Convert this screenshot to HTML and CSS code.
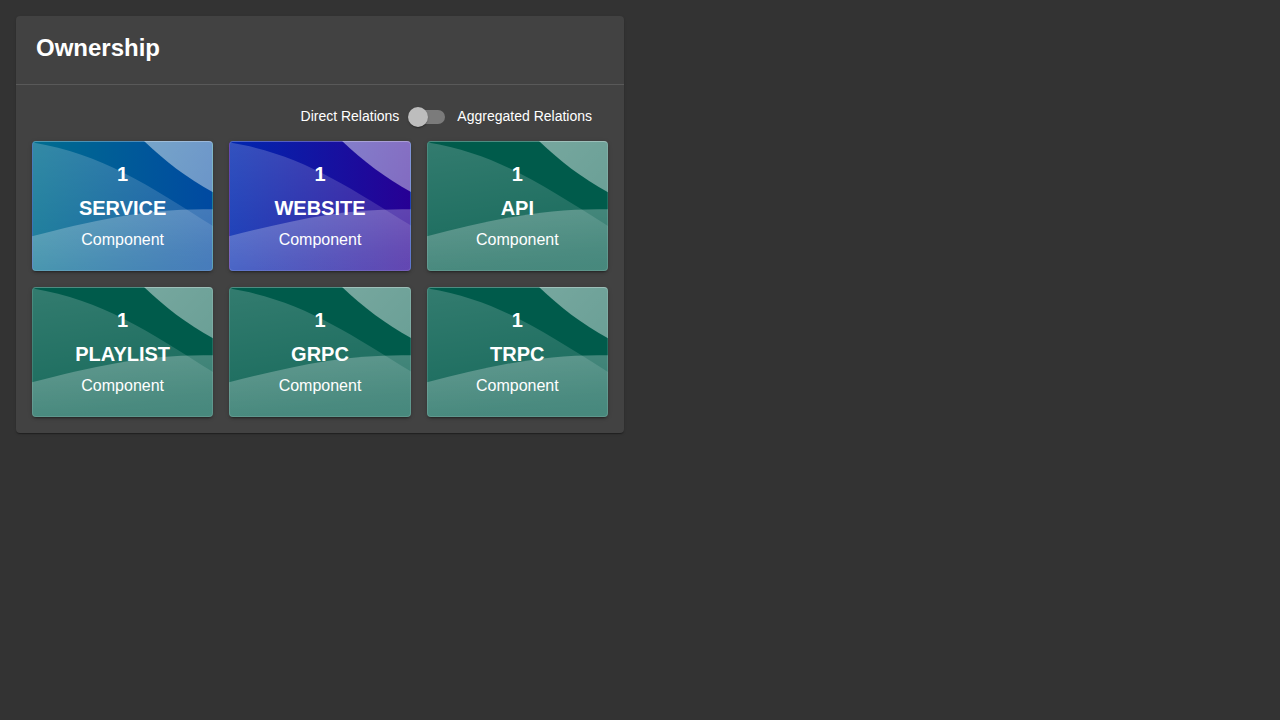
FILE: index.html
```html
<!DOCTYPE html>
<html lang="en">
<head>
<meta charset="utf-8">
<title>Ownership</title>
<link rel="stylesheet" href="styles.css">
</head>
<body>
<section class="panel">
  <header class="panel-header"><h5 class="panel-title">Ownership</h5></header>
  <hr class="divider">
  <div class="panel-content">
    <div class="toggle-row">
      <span>Direct Relations</span>
      <span class="switch" role="switch" aria-checked="false"><span class="thumb"></span></span>
      <span>Aggregated Relations</span>
    </div>
    <div class="grid">
      <div class="card service"><p class="bold">1</p><p class="bold kind">service</p><p class="sub">Component</p></div>
      <div class="card website"><p class="bold">1</p><p class="bold kind">website</p><p class="sub">Component</p></div>
      <div class="card"><p class="bold">1</p><p class="bold kind">api</p><p class="sub">Component</p></div>
      <div class="card"><p class="bold">1</p><p class="bold kind">playlist</p><p class="sub">Component</p></div>
      <div class="card"><p class="bold">1</p><p class="bold kind">grpc</p><p class="sub">Component</p></div>
      <div class="card"><p class="bold">1</p><p class="bold kind">trpc</p><p class="sub">Component</p></div>
    </div>
  </div>
</section>
</body>
</html>
```
FILE: styles.css
```css
* { box-sizing: border-box; }
body {
  margin: 0;
  padding: 16px;
  background: #333;
  color: #fff;
  font-family: "Liberation Sans", Arial, sans-serif;
}
.panel {
  width: 608px;
  height: 417px;
  background: #424242;
  border-radius: 4px;
  box-shadow: 0 2px 1px -1px rgba(0,0,0,.2), 0 1px 1px 0 rgba(0,0,0,.14), 0 1px 3px 0 rgba(0,0,0,.12);
}
.panel-header { height: 68px; padding: 16px 20px; }
.panel-title { margin: 0; font-size: 24px; line-height: 32px; font-weight: 700; }
.divider { height: 1px; margin: 0; border: 0; background: rgba(255,255,255,.12); }
.panel-content { padding: 12px 16px 16px; }
.toggle-row {
  display: flex;
  align-items: center;
  justify-content: flex-end;
  height: 40px;
  padding-right: 16px;
  font-size: 14px;
  line-height: 20px;
}
.toggle-row > span:first-child, .toggle-row > span:last-child { padding-bottom: 2px; }
.switch {
  display: flex;
  align-items: center;
  width: 34px;
  height: 14px;
  margin: 0 12px;
  border-radius: 7px;
  background: #7b7b7b;
}
.thumb {
  flex: none;
  width: 20px;
  height: 20px;
  margin-left: -3px;
  border-radius: 50%;
  background: #bdbdbd;
  box-shadow: 0 2px 1px -1px rgba(0,0,0,.2), 0 1px 1px 0 rgba(0,0,0,.14), 0 1px 3px 0 rgba(0,0,0,.12);
}
.grid { display: grid; grid-template-columns: repeat(3, 1fr); gap: 16px; margin-top: 4px; }
.card {
  --base: linear-gradient(90deg, #005b4b, #005b4b);
  --wave: url("data:image/svg+xml,%3Csvg xmlns='http://www.w3.org/2000/svg' viewBox='-1 -1 182 130' preserveAspectRatio='none'%3E%3Cdefs%3E%3ClinearGradient id='g' gradientUnits='userSpaceOnUse' x1='0' y1='0' x2='20' y2='128'%3E%3Cstop stop-color='white' stop-opacity='.2'/%3E%3Cstop offset='1' stop-color='white' stop-opacity='.1'/%3E%3C/linearGradient%3E%3ClinearGradient id='h' gradientUnits='userSpaceOnUse' x1='90' y1='67' x2='94' y2='128'%3E%3Cstop stop-color='white' stop-opacity='.27'/%3E%3Cstop offset='1' stop-color='white' stop-opacity='.2'/%3E%3C/linearGradient%3E%3ClinearGradient id='i' gradientUnits='userSpaceOnUse' x1='125' y1='0' x2='180' y2='50'%3E%3Cstop stop-color='white' stop-opacity='.46'/%3E%3Cstop offset='1' stop-color='white' stop-opacity='.42'/%3E%3C/linearGradient%3E%3C/defs%3E%3Cpath d='M-1 .5H0C70 12 115 43 181 84V129H-1Z' fill='url(%23g)'/%3E%3Cpath d='M-1 94.3C62 78 116 66 181 67.3V129H-1Z' fill='url(%23h)'/%3E%3Cpath d='M111.7 -1L112.7 0C132.7 19 154.7 36 181 50.3V-1Z' fill='url(%23i)'/%3E%3C/svg%3E");
  height: 130px;
  padding: 15px;
  border: 1px solid rgba(255,255,255,.12);
  border-top-color: rgba(255,255,255,.3);
  border-radius: 4px;
  background-image: var(--wave), var(--base);
  background-origin: border-box, padding-box;
  background-repeat: no-repeat, repeat;
  background-size: 100% 100%;
  box-shadow: 0 3px 1px -2px rgba(0,0,0,.2), 0 2px 2px 0 rgba(0,0,0,.14), 0 1px 5px 0 rgba(0,0,0,.12);
  text-align: center;
}
.service { --base: linear-gradient(90deg, #006d8f, #0049a1); }
.website { --base: linear-gradient(90deg, #0027af, #270094); }
.card p { margin: 0; }
.bold { font-size: 20px; line-height: 34px; font-weight: 700; }
.kind { text-transform: uppercase; }
.sub { font-size: 16px; line-height: 30px; }
```
